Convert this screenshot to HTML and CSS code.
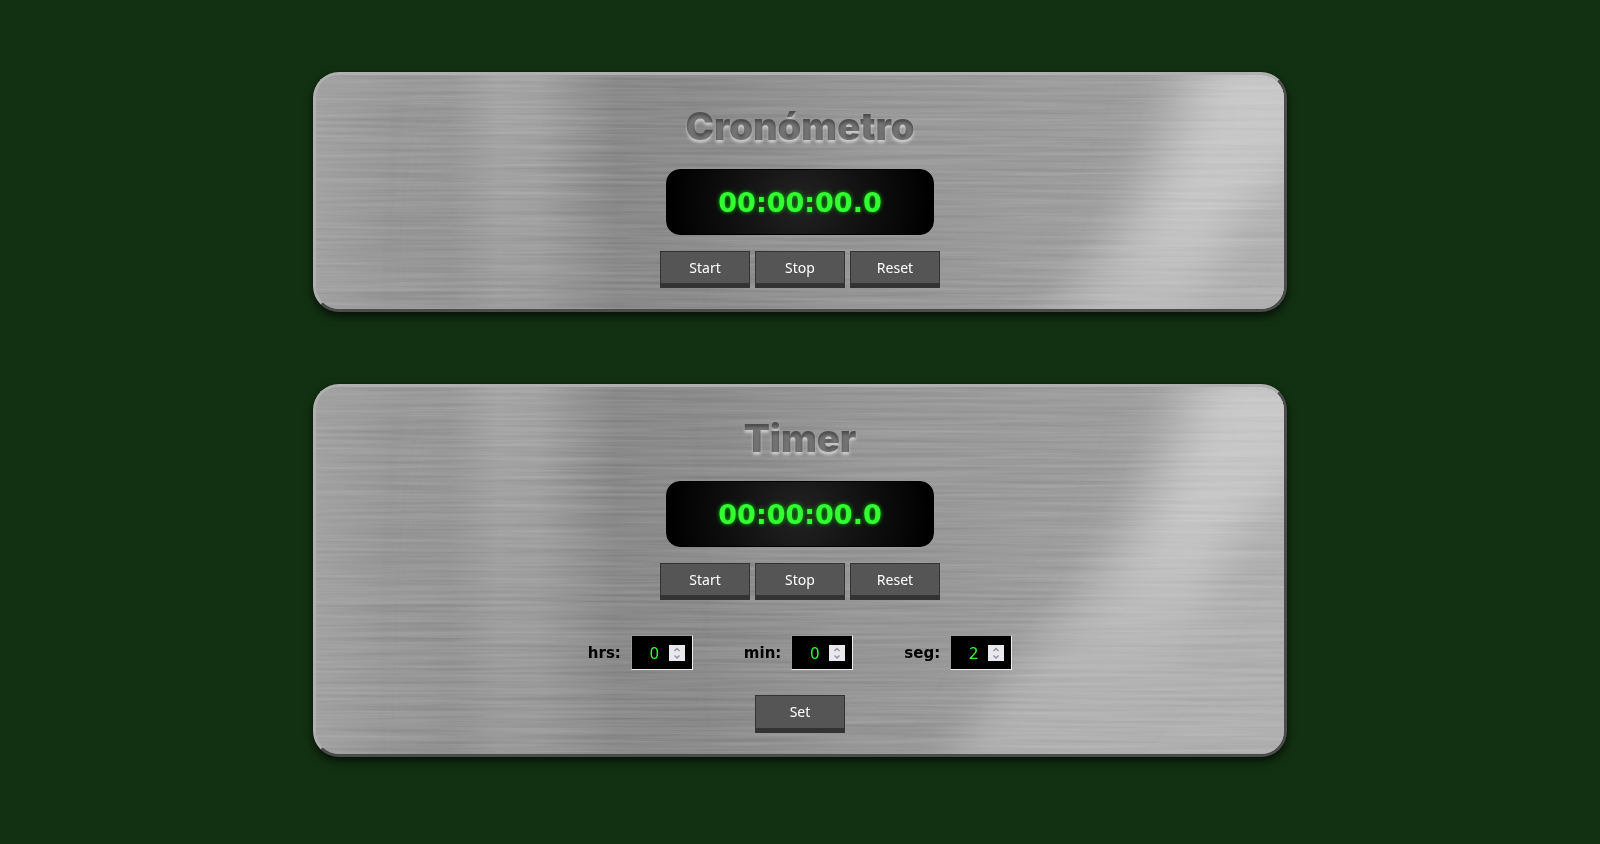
FILE: index.html
```html
<!DOCTYPE html>
<html lang="es">
<head>
<meta charset="utf-8">
<title>Cronómetro y Timer</title>
<link rel="stylesheet" href="styles.css">
</head>
<body>
<svg class="defs" width="0" height="0" aria-hidden="true">
  <defs>
    <linearGradient id="base" x1="0" y1="0" x2="1" y2="0">
      <stop offset="0" stop-color="#a2a2a2"/>
      <stop offset=".08" stop-color="#989898"/>
      <stop offset=".14" stop-color="#999"/>
      <stop offset=".19" stop-color="#a6a6a6"/>
      <stop offset=".23" stop-color="#a4a4a4"/>
      <stop offset=".31" stop-color="#8a8a8a"/>
      <stop offset=".4" stop-color="#8b8b8b"/>
      <stop offset=".55" stop-color="#969696"/>
      <stop offset=".75" stop-color="#9c9c9c"/>
      <stop offset="1" stop-color="#a2a2a2"/>
    </linearGradient>
    <linearGradient id="fade" x1="0" y1="0" x2="0" y2="1">
      <stop offset="0" stop-color="#c8c8c8"/>
      <stop offset=".5" stop-color="#c8c8c8" stop-opacity=".9"/>
      <stop offset="1" stop-color="#b8b8b8" stop-opacity="0"/>
    </linearGradient>
    <linearGradient id="dim" x1="0" y1="0" x2="0" y2="1">
      <stop offset="0" stop-color="#8a8a8a" stop-opacity="0"/>
      <stop offset="1" stop-color="#8a8a8a" stop-opacity=".6"/>
    </linearGradient>
    <filter id="soft" x="-20%" y="-20%" width="140%" height="140%"><feGaussianBlur stdDeviation="20"/></filter>
    <filter id="grain" x="0" y="0" width="100%" height="100%" color-interpolation-filters="sRGB">
      <feTurbulence type="fractalNoise" baseFrequency="0.006 0.3" numOctaves="3" seed="7"/>
      <feColorMatrix values="1 0 0 0 0  1 0 0 0 0  1 0 0 0 0  0 0 0 0 1"/>
    </filter>
    <g id="metal">
      <rect width="968" height="366" fill="url(#base)"/>
      <rect x="110" width="240" height="480" fill="url(#dim)" filter="url(#soft)"/>
      <path d="M880-60 L853 0 Q820 130 734 233 T610 420 L1060 420 L1060-60Z" fill="#b0b0b0" filter="url(#soft)"/>
      <path d="M925-60 L890 0 Q850 130 775 230 L670 366 L770 366 Q890 240 920 140 L1020 60 L1020-60Z" fill="url(#fade)" filter="url(#soft)"/>
      <rect width="968" height="366" filter="url(#grain)" class="grain"/>
    </g>
  </defs>
</svg>
<main class="page">
  <section class="panel">
    <svg class="metal" viewBox="0 0 968 366" preserveAspectRatio="xMidYMin slice" aria-hidden="true"><use href="#metal"/></svg>
    <h1 class="title">Cronómetro</h1>
    <output class="display">00:00:00.0</output>
    <div class="buttons">
      <button class="btn" type="button">Start</button>
      <button class="btn" type="button">Stop</button>
      <button class="btn" type="button">Reset</button>
    </div>
  </section>
  <section class="panel">
    <svg class="metal" viewBox="0 0 968 366" preserveAspectRatio="xMidYMin slice" aria-hidden="true"><use href="#metal"/></svg>
    <h1 class="title">Timer</h1>
    <output class="display">00:00:00.0</output>
    <div class="buttons">
      <button class="btn" type="button">Start</button>
      <button class="btn" type="button">Stop</button>
      <button class="btn" type="button">Reset</button>
    </div>
    <form class="settings">
      <div class="fields">
        <div class="field">
          <label for="hrs">hrs:</label>
          <span class="number"><input id="hrs" type="number" min="0" value="0"><svg class="spin" viewBox="0 0 16 16" aria-hidden="true"><path d="M5.500 6 8 3.500 10.500 6M5.500 10.500 8 13 10.500 10.500"/></svg></span>
        </div>
        <div class="field">
          <label for="min">min:</label>
          <span class="number"><input id="min" type="number" min="0" value="0"><svg class="spin" viewBox="0 0 16 16" aria-hidden="true"><path d="M5.500 6 8 3.500 10.500 6M5.500 10.500 8 13 10.500 10.500"/></svg></span>
        </div>
        <div class="field">
          <label for="seg">seg:</label>
          <span class="number"><input id="seg" type="number" min="0" value="2"><svg class="spin" viewBox="0 0 16 16" aria-hidden="true"><path d="M5.500 6 8 3.500 10.500 6M5.500 10.500 8 13 10.500 10.500"/></svg></span>
        </div>
      </div>
      <button class="btn" type="button">Set</button>
    </form>
  </section>
</main>
</body>
</html>
```

FILE: styles.css
```css
body {
  margin: 0;
  background: #123112;
  font-family: "Noto Sans", Tahoma, sans-serif;
}

.defs {
  position: absolute;
}

.page {
  display: flex;
  flex-direction: column;
  align-items: center;
  gap: 72px;
  padding: 72px 0;
}

.panel {
  position: relative;
  display: flex;
  flex-direction: column;
  align-items: center;
  width: 58%;
  padding: 20px 20px 21px;
  border: 3px solid;
  border-color: #b0b0b0 #4c4c4c #4c4c4c #b0b0b0;
  border-radius: 26px;
  background: #999;
  box-shadow: 0 4px 10px rgba(0, 0, 0, 0.7);
}

.metal {
  position: absolute;
  inset: 0;
  width: 100%;
  height: 100%;
  border-radius: 23px;
}

.grain {
  mix-blend-mode: overlay;
  opacity: 0.14;
}

.title,
.display,
.buttons,
.settings {
  position: relative;
}

.title {
  margin: 6px 0 18px;
  font: 900 38px/50px Inter, "Arial Black", sans-serif;
  color: rgba(0, 0, 0, 0.4);
  background-color: #808080;
  background-clip: text;
  -webkit-background-clip: text;
  text-shadow: 0 3px 3px rgba(255, 255, 255, 0.5);
}

.display {
  box-sizing: border-box;
  width: 268px;
  padding-top: 2px;
  border: 1px solid #000;
  border-radius: 14px;
  background: radial-gradient(circle, #222, #000 130px);
  font: bold 27px/62px "DejaVu Sans", sans-serif;
  text-align: center;
  color: #3f3;
  text-shadow: 0 0 4px #0c0;
}

.buttons {
  display: flex;
  gap: 5px;
  margin-top: 16px;
}

.btn {
  width: 90px;
  height: 37px;
  padding: 0;
  border: 1px solid #333;
  border-bottom-width: 5px;
  background: #555;
  color: #fff;
  font: 14px/20px "Noto Sans", Tahoma, sans-serif;
}

.settings {
  display: flex;
  flex-direction: column;
  align-items: center;
  gap: 25px;
  margin-top: 35px;
}

.settings .btn {
  height: 38px;
}

.fields {
  display: flex;
  gap: 51px;
}

.field {
  display: flex;
  align-items: center;
  gap: 10px;
  font: bold 15px/20px "DejaVu Sans", sans-serif;
  color: #000;
}

.number {
  position: relative;
  display: flex;
}

.number input {
  box-sizing: border-box;
  width: 62px;
  height: 35px;
  padding: 0 33px 0 8px;
  border: 1px solid;
  border-color: #999 #eee #eee #999;
  border-radius: 0;
  background: #000;
  color: #3f3;
  font: 16px/20px "Noto Sans", Tahoma, sans-serif;
  text-align: right;
  appearance: textfield;
}

.number input::-webkit-inner-spin-button {
  display: none;
}

.spin {
  position: absolute;
  top: 10px;
  right: 8px;
  width: 16px;
  height: 16px;
  background: #e9e9ed;
  fill: none;
  stroke: #8f8f9d;
  stroke-width: 1.3;
  pointer-events: none;
}
```
